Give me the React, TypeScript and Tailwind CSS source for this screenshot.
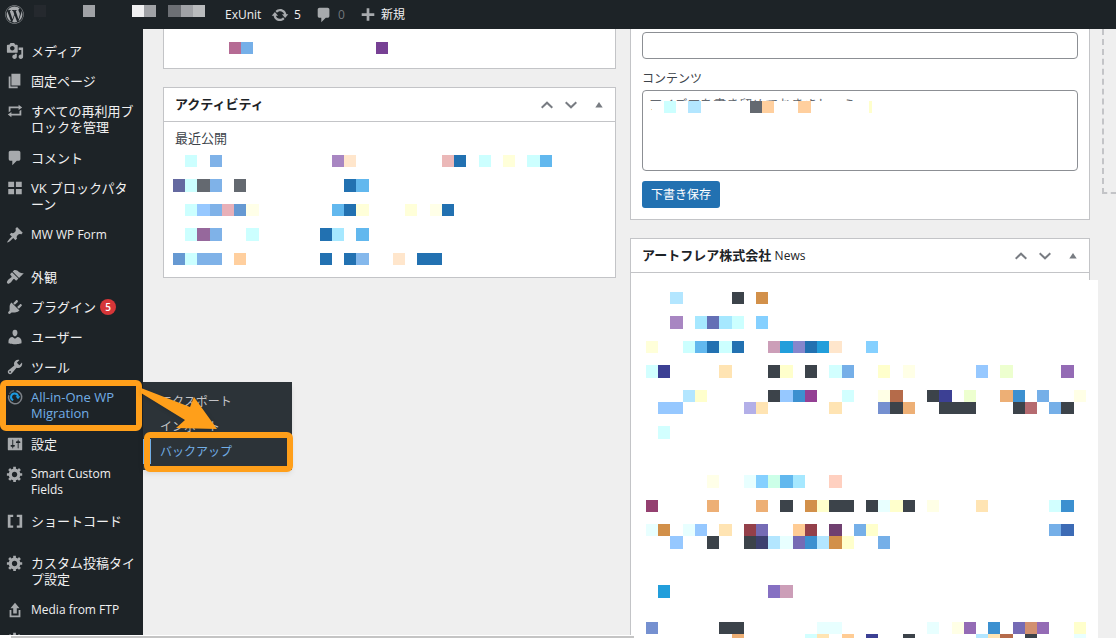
import type { ReactNode } from "react";
import { FaWordpress } from "react-icons/fa";

// [row, column, colour, columns spanned]
type Cell = [number, number, string, number?];

const STEP = 12.22;
const snap = (n: number) => Math.round(n * STEP);

const paths = {
  update:
    "M10.2 3.28c3.53 0 6.43 2.61 6.92 6h2.08l-3.5 4-3.5-4h2.32c-.45-1.97-2.21-3.45-4.32-3.45-1.45 0-2.73.71-3.54 1.78L4.95 5.66C6.23 4.2 8.11 3.28 10.2 3.28zm-.4 13.44c-3.52 0-6.43-2.61-6.92-6H.8l3.5-4c1.17 1.33 2.33 2.67 3.5 4H5.48c.45 1.97 2.21 3.45 4.32 3.45 1.45 0 2.73-.71 3.54-1.78l1.71 1.95c-1.28 1.46-3.15 2.38-5.25 2.38z",
  comment: "M5 2h9c1.1 0 2 .9 2 2v7c0 1.1-.9 2-2 2h-2l-5 5v-5H5c-1.1 0-2-.9-2-2V4c0-1.1.9-2 2-2z",
  plus: "M17 8v3h-5.500v5.500h-3V11H3V8h5.500V2.500h3V8z",
  media:
    "M13 11V4c0-.55-.45-1-1-1h-1.67L9 1H5L3.67 3H2c-.55 0-1 .45-1 1v7c0 .55.45 1 1 1h10c.55 0 1-.45 1-1zM7 4.5c1.38 0 2.5 1.12 2.5 2.5S8.38 9.5 7 9.5 4.500 8.38 4.500 7 5.62 4.500 7 4.500zM14 6h5v10.500c0 1.380-1.120 2.500-2.500 2.500S14 17.880 14 16.500s1.120-2.500 2.500-2.500c.17 0 .34.02.5.05V9h-3V6zm-4 8.050V13h2v3.500c0 1.380-1.120 2.500-2.500 2.500S7 17.880 7 16.500 8.120 14 9.500 14c.17 0 .34.02.5.05z",
  page: "M6 15V2h10v13H6zm-1 1h8v2H3V5h2v11z",
  repeat: "M5 7v3l-2 1.5V5h11V3l4 3.01L14 9V7H5zm10 6v-3l2-1.5V15H6v2l-4-3.01L6 11v2h9z",
  blocks: "M2.500 3h6.500v6H2.500zM11 3h6.500v6H11zM2.500 11h6.500v6H2.500zM11 11h6.500v6H11z",
  pin: "M10.44 3.02l1.82-1.82 6.36 6.35-1.83 1.82c-1.05-.68-2.48-.57-3.41.36l-.75.75c-.92.93-1.04 2.35-.35 3.41l-1.83 1.82-2.41-2.41-2.8 2.79c-.42.42-3.38 2.71-3.8 2.29s1.86-3.39 2.28-3.81l2.79-2.79L4.1 9.36l1.83-1.82c1.05.69 2.48.57 3.4-.36l.75-.75c.93-.92 1.05-2.35.36-3.41z",
  brush:
    "M14.48 11.06L7.41 3.99l1.5-1.5c.5-.56 2.3-.47 3.51.32 1.21.8 1.43 1.28 2.91 2.1 1.18.64 2.45 1.26 4.45.85zm-.71.71L6.7 4.7 4.93 6.47c-.39.39-.39 1.02 0 1.41l1.06 1.06c.39.39.39 1.03 0 1.42-.6.6-1.43 1.11-2.21 1.69-.35.26-.7.53-1.01.84C1.43 14.23.4 16.08 1.4 17.07c.99 1 2.84-.03 4.18-1.36.31-.31.58-.66.85-1.02.57-.78 1.08-1.61 1.69-2.21.39-.39 1.02-.39 1.41 0l1.06 1.06c.39.39 1.02.39 1.41 0z",
  plug: "M13.11 4.36L9.87 7.6 8 5.73l3.24-3.24c.35-.34 1.05-.2 1.56.32.52.51.66 1.21.31 1.55zm-8 1.77l.91-1.12 9.01 9.01-1.19.84c-.71.71-2.63 1.16-3.82 1.16H6.14L4.9 17.26c-.59.59-1.54.59-2.12 0-.59-.58-.59-1.53 0-2.12l1.24-1.24v-3.88c0-1.13.4-3.19 1.09-3.89zm7.26 3.97l3.24-3.24c.34-.35 1.04-.21 1.55.31.52.51.66 1.21.31 1.55l-3.24 3.25z",
  user: "M10 9.25c-2.27 0-2.73-3.44-2.73-3.44C7 4.02 7.82 2 9.97 2c2.16 0 2.98 2.02 2.71 3.81 0 0-.41 3.44-2.68 3.44zm0 2.57L12.72 10c2.39 0 4.52 2.33 4.52 4.53v2.49s-3.65 1.13-7.24 1.13c-3.65 0-7.24-1.13-7.24-1.13v-2.49c0-2.25 1.94-4.48 4.47-4.48z",
  wrench:
    "M16.68 9.77c-1.34 1.34-3.3 1.67-4.95.99l-5.41 6.52c-.99.99-2.59.99-3.58 0s-.99-2.59 0-3.57l6.52-5.42c-.68-1.65-.35-3.61.99-4.95 1.28-1.28 3.12-1.62 4.72-1.06l-2.89 2.89 2.82 2.82 2.86-2.87c.53 1.58.18 3.39-1.08 4.65zM3.81 16.21c.4.39 1.04.39 1.43 0 .4-.4.4-1.04 0-1.43-.39-.4-1.03-.4-1.43 0-.39.39-.39 1.03 0 1.43z",
  settings:
    "M18 16V4c0-.55-.45-1-1-1H3c-.55 0-1 .45-1 1v12c0 .55.45 1 1 1h14c.55 0 1-.45 1-1zM8 11h1c.55 0 1 .45 1 1s-.45 1-1 1H8v1.5c0 .28-.22.5-.5.5s-.5-.22-.5-.5V13H6c-.55 0-1-.45-1-1s.45-1 1-1h1V5.500c0-.28.22-.5.5-.5s.5.22.5.5V11zm5-2h-1c-.55 0-1-.45-1-1s.45-1 1-1h1V5.500c0-.28.22-.5.5-.5s.5.22.5.5V7h1c.55 0 1 .45 1 1s-.45 1-1 1h-1v5.500c0 .28-.22.5-.5.5s-.5-.22-.5-.5V9z",
  gear: "M18 12h-2.18c-.17.7-.44 1.35-.81 1.93l1.54 1.54-2.1 2.1-1.54-1.54c-.58.36-1.23.63-1.91.79V19H8v-2.18c-.68-.16-1.33-.43-1.91-.79l-1.54 1.54-2.12-2.12 1.54-1.54c-.36-.58-.63-1.23-.79-1.91H1V9.03h2.17c.16-.7.44-1.35.8-1.94L2.43 5.55l2.1-2.1 1.54 1.54c.58-.37 1.24-.64 1.93-.81V2h3v2.18c.68.16 1.33.43 1.91.79l1.54-1.54 2.12 2.12-1.54 1.54c.36.59.64 1.24.8 1.94H18V12zm-8.5 1.5c1.66 0 3-1.34 3-3s-1.34-3-3-3-3 1.34-3 3 1.34 3 3 3z",
  brackets: "M2 3h6v2.500H5v9.500h3v2.500H2zM12 3h6v14.500h-6V15h3V5.500h-3z",
  upload: "M8 14V8H5l5-6 5 6h-3v6H8zm-2 2v-6H4v8h12v-8h-2v6H6z",
};

type IconName = keyof typeof paths;

interface MenuItem {
  icon: IconName | "migration";
  lines: string[];
  badge?: string;
  gap?: boolean;
  small?: boolean;
}

const menu: MenuItem[] = [
  { icon: "media", lines: ["メディア"] },
  { icon: "page", lines: ["固定ページ"] },
  { icon: "repeat", lines: ["すべての再利用ブ", "ロックを管理"] },
  { icon: "comment", lines: ["コメント"] },
  { icon: "blocks", lines: ["VK ブロックパタ", "ーン"] },
  { icon: "pin", lines: ["MW WP Form"], small: true },
  { icon: "brush", lines: ["外観"], gap: true },
  { icon: "plug", lines: ["プラグイン"], badge: "5" },
  { icon: "user", lines: ["ユーザー"] },
  { icon: "wrench", lines: ["ツール"] },
  { icon: "migration", lines: ["All-in-One WP", "Migration"] },
  { icon: "settings", lines: ["設定"] },
  { icon: "gear", lines: ["Smart Custom", "Fields"], small: true },
  { icon: "brackets", lines: ["ショートコード"] },
  { icon: "gear", lines: ["カスタム投稿タイ", "プ設定"], gap: true },
  { icon: "upload", lines: ["Media from FTP"], small: true },
  { icon: "gear", lines: [] },
];

const barCells: Cell[] = [
  [0, 0, "#25292e"], [0, 4, "#a0a2a6"], [0, 8, "#f0f0f1"], [0, 9, "#a0a2a6"],
  [0, 11, "#6c6f74"], [0, 12, "#a0a2a6"], [0, 13, "#b9bbbd"],
];

const topCells: Cell[] = [[0, 0, "#b56b94"], [0, 1, "#75afe8"], [0, 12, "#774094"]];

const draftCells: Cell[] = [
  [0, 0, "#ccffff"], [0, 2, "#b3e6ff"], [0, 7, "#646970"], [0, 8, "#ffcf9e"], [0, 11, "#ffcf9e"],
];

const activityCells: Cell[] = [
  [0, 1, "#ccffff"], [0, 3, "#7fb2e8"], [0, 13, "#a886c2"], [0, 14, "#ffe6cc"], [0, 22, "#ebb8b8"],
  [0, 23, "#2271b1"], [0, 25, "#ccffff"], [0, 27, "#ffffd9"], [0, 29, "#ccffff"], [0, 30, "#62b8ee"],
  [2, 0, "#6469a0"], [2, 1, "#ccffff"], [2, 2, "#646970"], [2, 3, "#7fb2e8"], [2, 5, "#646970"],
  [2, 14, "#2271b1"], [2, 15, "#62b8ee"],
  [4, 1, "#ccffff"], [4, 2, "#96c8ff"], [4, 3, "#7fb2e8"], [4, 4, "#e8b0b8"], [4, 5, "#6699d2"],
  [4, 6, "#ffffe8"], [4, 13, "#62b8ee"], [4, 14, "#2271b1"], [4, 15, "#ffffd9"], [4, 19, "#ffffd9"],
  [4, 21, "#ffffe8"], [4, 22, "#2271b1"],
  [6, 1, "#ccffff"], [6, 2, "#96689c"], [6, 3, "#7fb2e8"], [6, 6, "#ccffff"], [6, 12, "#2271b1"],
  [6, 13, "#a6e8ff"], [6, 15, "#62b8ee"],
  [8, 0, "#6699d2"], [8, 1, "#ccffff"], [8, 2, "#7fb2e8", 2], [8, 5, "#ffcf9e"], [8, 12, "#2271b1"],
  [8, 14, "#2271b1"], [8, 15, "#84b8ec"], [8, 18, "#ffe6cc"], [8, 20, "#2271b1", 2],
];

const newsCells: Cell[] = [
  [0, 2, "#b3e6ff"], [0, 7, "#3c434a"], [0, 9, "#d2904a"],
  [2, 2, "#a886c2"], [2, 4, "#a6e8ff"], [2, 5, "#646fb5"], [2, 6, "#a6e8ff"], [2, 7, "#ccffff"], [2, 9, "#85d0ff"],
  [4, 0, "#ffffd9"], [4, 3, "#ccffff"], [4, 4, "#62b8ee"], [4, 5, "#2271b1"], [4, 6, "#ccffff"],
  [4, 7, "#2271b1"], [4, 10, "#cc9eb8"], [4, 11, "#229edb"], [4, 12, "#8686cc"], [4, 13, "#2271b1"],
  [4, 14, "#229edb"], [4, 15, "#ffe6cc"], [4, 18, "#85d0ff"],
  [6, 0, "#d2ffff"], [6, 1, "#3c4094"], [6, 6, "#ffe4b3"], [6, 10, "#3c434a"], [6, 11, "#ffffcc"],
  [6, 13, "#3c434a"], [6, 15, "#d2ffff"], [6, 16, "#75afe8"], [6, 19, "#ffffcc"], [6, 21, "#ffffe6"],
  [6, 27, "#96c8ff"], [6, 29, "#edffcf"], [6, 34, "#946bb5"],
  [8, 3, "#b3e6ff"], [8, 4, "#ffffcc"], [8, 10, "#3c434a"], [8, 11, "#96c8ff"], [8, 12, "#3c90d0"],
  [8, 13, "#944094"], [8, 16, "#d2ffff"], [8, 19, "#ffffe6"], [8, 20, "#b56b4a"], [8, 23, "#3c434a"],
  [8, 24, "#3c4094"], [8, 26, "#edffcf"], [8, 29, "#edaf75"], [8, 30, "#3c90d0"], [8, 32, "#75afe8"], [8, 35, "#ffffe6"],
  [9, 1, "#96c8ff", 2], [9, 8, "#b3afe8"], [9, 9, "#ffe4b3"], [9, 15, "#ffe4b3"], [9, 19, "#7590d0"],
  [9, 20, "#3c434a"], [9, 21, "#edaf75"], [9, 24, "#3c434a", 3], [9, 30, "#3c434a"], [9, 31, "#b56b70"],
  [9, 33, "#75afe8"], [9, 34, "#3c434a"],
  [11, 1, "#d2ffff"],
  [15, 5, "#ffffe8"], [15, 8, "#e8ffff"], [15, 9, "#85d0ff"], [15, 10, "#ccffe8"], [15, 11, "#62b8ee"],
  [15, 12, "#a6e8ff"], [15, 15, "#ffd0c0"],
  [17, 0, "#944070"], [17, 5, "#edaf75"], [17, 9, "#edaf75"], [17, 11, "#3c434a"], [17, 13, "#d2904a"],
  [17, 14, "#ffffcc"], [17, 15, "#3c434a", 2], [17, 18, "#3c434a"], [17, 19, "#e8ffff"], [17, 20, "#ffffcc"],
  [17, 21, "#3c434a"], [17, 23, "#ffffe6"], [17, 27, "#ffe4b3"], [17, 33, "#d2ffff"], [17, 34, "#3c90d0"],
  [19, 0, "#e8ffff"], [19, 1, "#d2904a"], [19, 3, "#e8ffff"], [19, 4, "#96c8ff"], [19, 6, "#ffe4b3"],
  [19, 8, "#94404a"], [19, 9, "#756bb5"], [19, 12, "#ffcc94"], [19, 13, "#94404a"], [19, 15, "#704070"],
  [19, 17, "#75afe8"], [19, 18, "#ffffcc"], [19, 33, "#75afe8"], [19, 34, "#3c6bb5"],
  [20, 2, "#96c8ff"], [20, 5, "#3c434a"], [20, 8, "#3c434a"], [20, 9, "#3c4070"], [20, 10, "#b3e6ff"],
  [20, 11, "#e8ffff"], [20, 12, "#756bb5"], [20, 13, "#3c90d0"], [20, 14, "#b3e6ff"], [20, 15, "#d2904a"],
  [20, 16, "#ffffcc"], [20, 19, "#75afe8"],
  [24, 1, "#229edb"], [24, 10, "#8670c2"], [24, 11, "#cc9eb8"],
  [27, 0, "#7590d0"], [27, 6, "#3c434a", 2], [27, 14, "#e8ffff", 2], [27, 23, "#e8ffff"], [27, 25, "#ffffe6"],
  [27, 26, "#946bb5"], [27, 28, "#3c90d0"], [27, 30, "#756bb5"], [27, 31, "#d29070"], [27, 32, "#946bb5"], [27, 35, "#ffffcc"],
  [28, 7, "#edaf75"], [28, 13, "#d2ffff"], [28, 14, "#ffe4b3"], [28, 16, "#ffcc94"], [28, 18, "#3c4094"],
  [28, 21, "#3c434a"], [28, 27, "#b3e6ff"], [28, 28, "#ffe4b3"], [28, 29, "#b56b4a"], [28, 31, "#3c434a"], [28, 35, "#e8ffff"],
];

function Mosaic({ cells, cols, rows }: { cells: Cell[]; cols: number; rows: number }) {
  return (
    <svg width={snap(cols)} height={snap(rows)} shapeRendering="crispEdges" className="block shrink-0" aria-hidden="true">
      {cells.map(([r, c, fill, span = 1]) => (
        <rect key={`${r}-${c}`} x={snap(c)} y={snap(r)} width={snap(c + span) - snap(c)} height={snap(r + 1) - snap(r)} fill={fill} />
      ))}
    </svg>
  );
}

function Icon({ name }: { name: IconName }) {
  return (
    <svg viewBox="0 0 20 20" className="block size-[18px] shrink-0 fill-[#a7aaad]" aria-hidden="true">
      <path d={paths[name]} />
    </svg>
  );
}

function MigrationIcon() {
  return (
    <svg viewBox="0 0 18 18" className="block size-[18px] shrink-0" fill="none" aria-hidden="true">
      <path d="M10.500 2.700a6.600 6.600 0 1 1-7.700 4.600" stroke="#7d8288" strokeWidth="1.500" />
      <path d="M3.300 6A6.600 6.600 0 0 1 8 2.500" stroke="#50575e" strokeWidth="1.300" />
      <path d="M7.200 12.200a3.500 3.500 0 1 1 4.800-3.700" stroke="#1e9be0" strokeWidth="2" />
      <path d="M9.600 8.300h4.800l-2.400 3z" fill="#1e9be0" />
    </svg>
  );
}

function PanelHeader({ title }: { title: ReactNode }) {
  return (
    <div className="flex h-[34px] items-center border-b border-[#c3c4c7] pl-[11px] pr-3">
      <h2 className="flex-1 text-[13px] font-semibold text-[#1d2327]">{title}</h2>
      <div className="flex items-center text-[#787c82]">
        <button type="button" aria-label="上に移動" className="flex w-6 justify-center">
          <svg width="12" height="8" viewBox="0 0 12 8" fill="none" stroke="currentColor" strokeWidth="2">
            <path d="M.7 6.700 6 1.700l5.300 5" />
          </svg>
        </button>
        <button type="button" aria-label="下に移動" className="flex w-6 justify-center">
          <svg width="12" height="8" viewBox="0 0 12 8" fill="none" stroke="currentColor" strokeWidth="2">
            <path d="M.7 1.300 6 6.300l5.300-5" />
          </svg>
        </button>
        <button type="button" aria-label="パネルを閉じる" className="ml-3 flex w-2 justify-center">
          <svg width="8" height="6" viewBox="0 0 8 6" fill="currentColor">
            <path d="M4 0l3.700 5.500H.3z" />
          </svg>
        </button>
      </div>
    </div>
  );
}

function AdminBar() {
  return (
    <header className="flex h-[29px] shrink-0 items-center bg-[#1d2327] pl-[5px] text-[13px] text-[#f0f0f1]">
      <a href="#" aria-label="WordPress">
        <FaWordpress className="size-[19px] text-[#a7aaad]" />
      </a>
      <div className="mb-[7px] ml-[10px]">
        <Mosaic cells={barCells} cols={14} rows={1} />
      </div>
      <a href="#" className="ml-5 w-[46px] text-xs">ExUnit</a>
      <a href="#" className="flex w-11 items-center gap-[5px] text-xs">
        <Icon name="update" />5
      </a>
      <a href="#" className="flex w-11 items-center gap-[5px] text-xs text-[#72777c]">
        <Icon name="comment" />0
      </a>
      <a href="#" className="flex items-center gap-1 text-xs">
        <Icon name="plus" />新規
      </a>
    </header>
  );
}

function Sidebar() {
  return (
    <nav className="relative z-10 w-[143px] shrink-0 bg-[#1d2327] pt-[7px] text-[13px] leading-4 text-[#f0f0f1]">
      <ul>
        {menu.map(({ icon, lines, badge, gap, small }, i) => {
          const active = icon === "migration";
          return (
            <li key={i} className={`relative ${gap ? "mt-3" : ""}`}>
              <a
                href="#"
                className={`flex items-start gap-[7px] whitespace-nowrap pl-[6px] pt-[7px] ${lines.length > 1 ? "pb-2" : "pb-[7px]"} ${active ? "text-[#72aee6]" : ""}`}
              >
                <span className="-my-px">{icon === "migration" ? <MigrationIcon /> : <Icon name={icon} />}</span>
                <span className={small ? "text-xs leading-4" : ""}>
                  {lines.map(l => <span key={l} className="block">{l}</span>)}
                </span>
                {badge && (
                  <span className="-ml-[3px] size-4 rounded-full bg-[#d63638] text-center text-[10px] font-semibold text-white">{badge}</span>
                )}
              </a>
              {active && <Submenu />}
            </li>
          );
        })}
      </ul>
    </nav>
  );
}

function Submenu() {
  return (
    <>
      <ul className="absolute left-full top-0 w-[149px] bg-[#2c3338] pb-[6px] pt-[7px] text-[12px] leading-[25px] text-[#c3c4c7] shadow-md">
        <li><a href="#" className="block pl-[17px]">エクスポート</a></li>
        <li><a href="#" className="block pl-[17px]">インポート</a></li>
        <li><a href="#" className="block border-l-[8px] border-[#72aee6] pl-[9px] text-[#72aee6]">バックアップ</a></li>
      </ul>
      {/* callouts and the arrow that joins them */}
      <span className="absolute -top-[2px] left-0 h-[51px] w-[142px] rounded-md border-[6px] border-[#ff9f1a]" />
      <span className="absolute left-[144px] top-[50px] h-10 w-[149px] rounded-md border-[6px] border-[#ff9f1a]" />
      <svg className="absolute left-[138px] top-1 drop-shadow-sm" width="84" height="48" aria-hidden="true">
        <path d="M3 2 52 21l4-10 23 32-41-1 9-8L3 7z" fill="#ff9f1a" />
      </svg>
    </>
  );
}

export default function App() {
  return (
    <div className="flex h-screen flex-col overflow-hidden bg-[#efefef] font-['Open_Sans','Noto_Sans_CJK_JP',sans-serif]">
      <AdminBar />
      <div className="flex min-h-0 flex-1">
        <Sidebar />
        <main className="flex min-w-0 flex-1 gap-3 pl-5 text-[13px] text-[#3c434a]">
          <div className="grid flex-1 grid-cols-[453fr_460fr] items-start gap-[14px]">
            <div className="flex flex-col gap-[18px]">
              <section className="h-10 border border-t-0 border-[#c3c4c7] bg-white pl-[65px] pt-[13px]">
                <Mosaic cells={topCells} cols={13} rows={1} />
              </section>
              <section className="border border-[#c3c4c7] bg-white">
                <PanelHeader title="アクティビティ" />
                <div className="pb-3 pl-[9px] pt-[6px]">
                  <h3 className="mb-[7px] pl-[2px] leading-5">最近公開</h3>
                  <Mosaic cells={activityCells} cols={31} rows={9} />
                </div>
              </section>
            </div>

            <div className="flex flex-col gap-[18px]">
              <form className="border border-t-0 border-[#c3c4c7] bg-white px-[11px] pb-[11px] pt-[3px]">
                <input aria-label="タイトル" className="block h-[27px] w-full rounded border border-[#8c8f94] px-2" />
                <label htmlFor="content" className="mb-px mt-[10px] block text-xs leading-5">コンテンツ</label>
                <div className="relative">
                  <textarea
                    id="content"
                    placeholder="アイデアを書き留めておきましょう。"
                    className="block h-[81px] w-full resize-none rounded border border-[#8c8f94] px-[6px] py-[3px] text-[13px] leading-5 placeholder:text-[#646970]"
                  />
                  <div className="absolute left-[10px] right-2 top-[11px] flex bg-white pb-2 pl-3">
                    <Mosaic cells={draftCells} cols={12} rows={1} />
                    <span className="ml-[58px] h-3 w-[3px] bg-[#ffffcc]" />
                  </div>
                </div>
                <button type="button" className="mt-[10px] block h-[27px] rounded-[3px] bg-[#2271b1] px-[9px] text-xs text-white">
                  下書き保存
                </button>
              </form>
              <section className="border border-[#c3c4c7] bg-white">
                <PanelHeader title={<>アートフレア株式会社 <span className="text-xs font-normal">News</span></>} />
                <div className="relative -mr-[9px] ml-1 mt-[7px] bg-white pb-8 pl-[11px] pt-3">
                  <Mosaic cells={newsCells} cols={36} rows={29} />
                </div>
              </section>
            </div>
          </div>
          <aside className="h-[165px] w-[14px] shrink-0 border-b-2 border-l-2 border-dashed border-[#c3c4c7]" />
        </main>
      </div>
      <div className="fixed bottom-0 left-0 z-20 flex h-[3px] w-[634px] border-t border-white bg-white pl-[11px]">
        <span className="flex-1 bg-[#c4c4c4]" />
      </div>
    </div>
  );
}
